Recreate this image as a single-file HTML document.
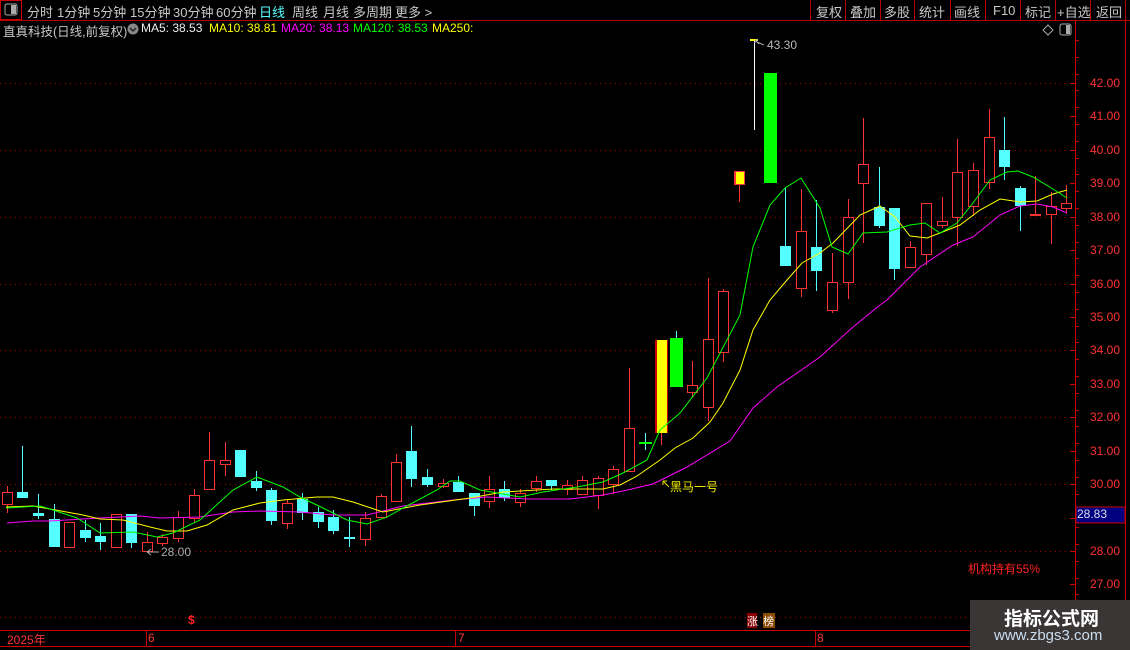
<!DOCTYPE html>
<html><head><meta charset="utf-8"><style>
body{margin:0;background:#000;width:1130px;height:650px;overflow:hidden;font-family:"Liberation Sans","Noto Sans CJK SC",sans-serif;}
.t{position:absolute;white-space:nowrap;font-size:13px;color:#c8c8c8;}
</style></head><body>
<svg id="s" width="1130" height="650" style="position:absolute;left:0;top:0" xmlns="http://www.w3.org/2000/svg">
<rect x="0" y="0" width="1130" height="650" fill="#000"/>
<rect x="0.5" y="0.5" width="21" height="19" fill="none" stroke="#c00" />
<rect x="5" y="4" width="12" height="11" rx="2" fill="none" stroke="#aaa"/>
<rect x="11" y="5" width="5" height="9" fill="#aaa"/>
<line x1="0" y1="20.5" x2="1130" y2="20.5" stroke="#b00"/>
<g stroke="#b00">
<line x1="810.5" y1="0" x2="810.5" y2="20"/><line x1="845.5" y1="0" x2="845.5" y2="20"/><line x1="880.5" y1="0" x2="880.5" y2="20"/><line x1="914.5" y1="0" x2="914.5" y2="20"/><line x1="950.5" y1="0" x2="950.5" y2="20"/><line x1="985.5" y1="0" x2="985.5" y2="20"/><line x1="1020.5" y1="0" x2="1020.5" y2="20"/><line x1="1055.5" y1="0" x2="1055.5" y2="20"/><line x1="1090.5" y1="0" x2="1090.5" y2="20"/><line x1="1125.5" y1="0" x2="1125.5" y2="20"/>
</g>
<circle cx="133" cy="29" r="5.5" fill="#888"/>
<path d="M130 28 l3 3 l3 -3" stroke="#222" fill="none" stroke-width="1.5"/>
<path d="M1048 25 l5 5 l-5 5 l-5 -5z" fill="none" stroke="#aaa"/>
<rect x="1060" y="24" width="11" height="11" rx="2" fill="none" stroke="#aaa"/>
<rect x="1066" y="25" width="4" height="9" fill="#aaa"/>
<line x1="1075.5" y1="20" x2="1075.5" y2="650" stroke="#c00"/>
<line x1="1125.5" y1="20" x2="1125.5" y2="650" stroke="#c00"/>
<line x1="0" y1="630.5" x2="1075" y2="630.5" stroke="#c00" stroke-width="1"/>
<line x1="0" y1="646.5" x2="1075" y2="646.5" stroke="#c00"/>
<line x1="146.5" y1="630" x2="146.5" y2="646" stroke="#c00"/>
<line x1="455.5" y1="630" x2="455.5" y2="646" stroke="#c00"/>
<line x1="815.5" y1="630" x2="815.5" y2="646" stroke="#c00"/>
<g id="grid" stroke="#a00" stroke-dasharray="1,4"></g>
<g id="ticks" stroke="#c00"></g>
<g id="cand"></g>
<g id="ma" fill="none" stroke-width="1"></g>
<rect x="1076" y="507" width="49" height="16" fill="#000080" stroke="#c00"/>
<line x1="750" y1="40" x2="758" y2="40" stroke="#ff0" stroke-width="2"/>
<path d="M755 40 l4 4 M755 40 l0 3 M755 40 l3 0 M757 42 l7 3" stroke="#aaa" fill="none"/>
<path d="M147 552 h12 M147 552 l4 -3 M147 552 l4 3" stroke="#aaa" fill="none"/>
<path d="M663 481 l6 6 M663 481 v4 M663 481 h4" stroke="#dd0" fill="none"/>
<rect x="747" y="613" width="10" height="15" fill="#800"/>
<rect x="763" y="613" width="12" height="15" fill="#8a4a00"/>
<rect x="970" y="603" width="4" height="12" fill="#0c0"/>
<rect x="970" y="600" width="160" height="50" fill="#3a3636"/>
</svg>
<div class="t" style="left:27px;top:2px">分时</div>
<div class="t" style="left:57px;top:2px">1分钟</div>
<div class="t" style="left:93px;top:2px">5分钟</div>
<div class="t" style="left:130px;top:2px">15分钟</div>
<div class="t" style="left:173px;top:2px">30分钟</div>
<div class="t" style="left:216px;top:2px">60分钟</div>
<div class="t" style="left:259px;top:2px;color:#5ff">日线</div>
<div class="t" style="left:292px;top:2px">周线</div>
<div class="t" style="left:323px;top:2px">月线</div>
<div class="t" style="left:353px;top:2px">多周期</div>
<div class="t" style="left:395px;top:2px">更多 &gt;</div>
<div class="t" style="left:816px;top:2px">复权</div>
<div class="t" style="left:850px;top:2px">叠加</div>
<div class="t" style="left:884px;top:2px">多股</div>
<div class="t" style="left:919px;top:2px">统计</div>
<div class="t" style="left:954px;top:2px">画线</div>
<div class="t" style="left:993px;top:3px">F10</div>
<div class="t" style="left:1025px;top:2px">标记</div>
<div class="t" style="left:1057px;top:2px">+自选</div>
<div class="t" style="left:1096px;top:2px">返回</div>
<div class="t" style="left:3px;top:21px;font-size:12.5px">直真科技(日线,前复权)</div>
<div class="t" style="left:141px;top:21px;font-size:12px;color:#eee">MA5: 38.53</div>
<div class="t" style="left:209px;top:21px;font-size:12px;color:#ff0">MA10: 38.81</div>
<div class="t" style="left:281px;top:21px;font-size:12px;color:#f0f">MA20: 38.13</div>
<div class="t" style="left:353px;top:21px;font-size:12px;color:#0f0">MA120: 38.53</div>
<div class="t" style="left:432px;top:21px;font-size:12px;color:#ff0">MA250:</div>
<div id="ax"></div>
<div class="t" style="left:1077px;top:507px;font-size:12px;color:#dde">28.83</div>
<div class="t" style="left:161px;top:545px;font-size:12px;color:#aaa">28.00</div>
<div class="t" style="left:767px;top:38px;font-size:12px;color:#bbb">43.30</div>
<div class="t" style="left:670px;top:478px;font-size:12px;color:#ee0">黑马一号</div>
<div class="t" style="left:968px;top:560px;font-size:12px;color:#f22">机构持有55%</div>
<div class="t" style="left:188px;top:613px;font-size:12px;color:#f22;font-weight:bold">$</div>
<div class="t" style="left:747px;top:613px;font-size:11px;color:#fff">涨</div>
<div class="t" style="left:763px;top:613px;font-size:11px;color:#fff">榜</div>
<div class="t" style="left:7px;top:631px;font-size:12px;color:#f33">2025年</div>
<div class="t" style="left:148px;top:631px;font-size:12px;color:#f33">6</div>
<div class="t" style="left:458px;top:631px;font-size:12px;color:#f33">7</div>
<div class="t" style="left:817px;top:631px;font-size:12px;color:#f33">8</div>
<div class="t" style="left:1004px;top:604px;font-size:19px;font-weight:bold;color:#fff">指标公式网</div>
<div class="t" style="left:994px;top:627px;font-size:15px;color:#cde">www.zbgs3.com</div>
<script>
var NS="http://www.w3.org/2000/svg";
function el(p,t,a){var e=document.createElementNS(NS,t);for(var k in a)e.setAttribute(k,a[k]);document.getElementById(p).appendChild(e);return e;}
function Y(p){return 83+(42-p)*33.43;}
for(var p=42;p>=28;p-=2){el("grid","line",{x1:0,x2:1075,y1:Math.round(Y(p))+.5,y2:Math.round(Y(p))+.5});}
el("grid","line",{x1:0,x2:1075,y1:617.5,y2:617.5});
var ax="";
for(var p=42;p>=27;p--){var y=Math.round(Y(p));el("ticks","line",{x1:1070,x2:1075,y1:y+.5,y2:y+.5});
if(p!=29) ax+='<div class="t" style="left:1090px;top:'+(y-7)+'px;font-size:12px;color:#f33">'+p.toFixed(2)+'</div>';}
for(var y=40;y<630;y+=16.8){el("ticks","line",{x1:1075,x2:1079,y1:Math.round(y)+.5,y2:Math.round(y)+.5});}
document.getElementById("ax").innerHTML=ax;
var C=[[7,486,513,492,504,'r'],[22,446,498,492,498,'c'],[38,494,519,513,516,'c'],[54,504,547,519,547,'c'],[69,522,547,522,547,'r'],[85,520,542,530,538,'c'],[100,523,550,536,542,'c'],[116,514,547,514,547,'r'],[131,514,548,514,543,'c'],[147,532,551,542,551,'r'],[162,534,546,537,543,'r'],[178,511,542,517,538,'r'],[194,489,523,495,518,'r'],[209,432,489,460,489,'r'],[225,442,476,460,464,'r'],[240,450,477,450,477,'c'],[256,471,491,481,488,'c'],[271,488,525,490,521,'c'],[287,500,529,503,523,'r'],[302,493,520,499,513,'c'],[318,507,528,512,522,'c'],[333,510,534,517,531,'c'],[349,517,547,537,539,'c'],[365,512,546,518,539,'r'],
[381,494,518,496,517,'r'],[396,454,501,462,501,'r'],[411,426,487,451,479,'c'],[427,469,487,477,485,'c'],[443,479,488,483,486,'r'],[458,476,492,482,492,'c'],[474,493,516,493,506,'c'],[489,476,508,489,501,'r'],[504,481,501,489,498,'c'],[520,489,507,493,502,'r'],[536,476,492,481,488,'r'],[551,480,490,480,486,'c'],[567,480,495,485,489,'r'],[582,476,494,480,494,'r'],[598,476,509,478,495,'r'],[613,466,494,469,484,'r'],[629,368,471,428,471,'r'],
[692,361,398,385,392,'r'],[708,278,421,339,407,'r'],[723,289,362,291,352,'r'],[785,188,266,246,266,'c'],[801,189,297,231,288,'r'],[816,200,291,247,271,'c'],[832,253,313,282,310,'r'],[848,199,299,217,282,'r'],[863,118,243,164,183,'r'],[879,167,228,207,226,'c'],[894,208,280,208,269,'c'],[910,241,268,247,267,'r'],[926,203,265,203,254,'r'],[942,197,228,221,225,'r'],[957,139,246,172,217,'r'],[973,163,216,170,206,'r'],[989,109,189,137,182,'r'],[1004,117,180,150,167,'c'],[1020,186,231,188,206,'c'],[1035,176,216,214,216,'r'],[1051,192,244,206,214,'r'],[1066,185,214,203,208,'r']];
C.forEach(function(c){var x=c[0],col=c[5]=='r'?'#ff3232':'#54ffff';
el("cand","line",{x1:x+.5,x2:x+.5,y1:c[1],y2:c[2],stroke:col});
var h=Math.max(c[4]-c[3],1);
if(c[5]=='r'){ if(h<=2) el("cand","rect",{x:x-5,y:c[3],width:11,height:2,fill:col}); else el("cand","rect",{x:x-5+.5,y:c[3]+.5,width:10,height:h,fill:'#000',stroke:col});}
else el("cand","rect",{x:x-5,y:c[3],width:11,height:h<2?2:h,fill:col});});
el("cand","line",{x1:645.5,x2:645.5,y1:433,y2:450,stroke:'#54ffff'});
el("cand","rect",{x:639,y:442,width:13,height:2,fill:'#0f0'});
el("cand","line",{x1:661.5,x2:661.5,y1:433,y2:445,stroke:'#ff3232'});
el("cand","rect",{x:655,y:340,width:13,height:93,fill:'#c00'});
el("cand","rect",{x:657,y:340,width:10,height:93,fill:'#ff0'});
el("cand","line",{x1:676.5,x2:676.5,y1:331,y2:338,stroke:'#54ffff'});
el("cand","rect",{x:670,y:338,width:13,height:49,fill:'#0f0'});
el("cand","line",{x1:739.5,x2:739.5,y1:185,y2:202,stroke:'#ff3232'});
el("cand","rect",{x:734,y:171,width:11,height:14,fill:'#f33'});
el("cand","rect",{x:736,y:172,width:8,height:12,fill:'#ff0'});
el("cand","line",{x1:754.5,x2:754.5,y1:40,y2:130,stroke:'#fff'});
el("cand","rect",{x:764,y:73,width:13,height:110,fill:'#0f0'});
function pl(pts,col){el("ma","polyline",{points:pts,stroke:col});}
pl("7,523 33,521 50,521 100,518 140,516 160,518 200,517 233,512 260,511 300,512 333,515 367,515 403,506 453,500 487,497 527,499 570,499 603,495 623,491 653,484 687,467 730,441 753,408 777,387 820,357 853,327 880,305 887,300 920,267 953,245 973,237 1000,215 1020,206 1037,204 1053,207 1067,213","#f0f");
pl("6,507 33,506 50,509 83,515 100,519 123,520 150,527 167,531 187,531 207,525 233,510 260,503 283,500 317,497 333,497 353,502 383,512 420,505 470,498 503,492 553,489 603,489 620,485 637,476 660,460 675,448 693,438 710,422 723,403 740,370 753,330 770,300 787,280 802,263 820,253 833,243 860,215 880,206 895,217 910,236 927,238 940,233 960,225 980,210 1000,199 1020,202 1037,201 1053,194 1067,190","#ff0");
pl("6,508 40,506 50,509 77,518 100,533 133,532 157,537 173,533 200,520 233,490 257,477 283,487 300,497 323,508 347,520 367,524 387,517 403,508 437,490 450,481 460,481 480,490 503,494 520,497 543,492 577,487 603,482 623,473 647,460 660,430 680,413 707,378 740,315 753,247 770,205 785,188 801,178 820,208 832,247 848,254 863,233 887,232 910,225 925,223 940,233 957,223 973,203 990,180 1007,172 1018,171 1033,177 1053,189 1067,198","#0f0");
</script>
</body></html>
